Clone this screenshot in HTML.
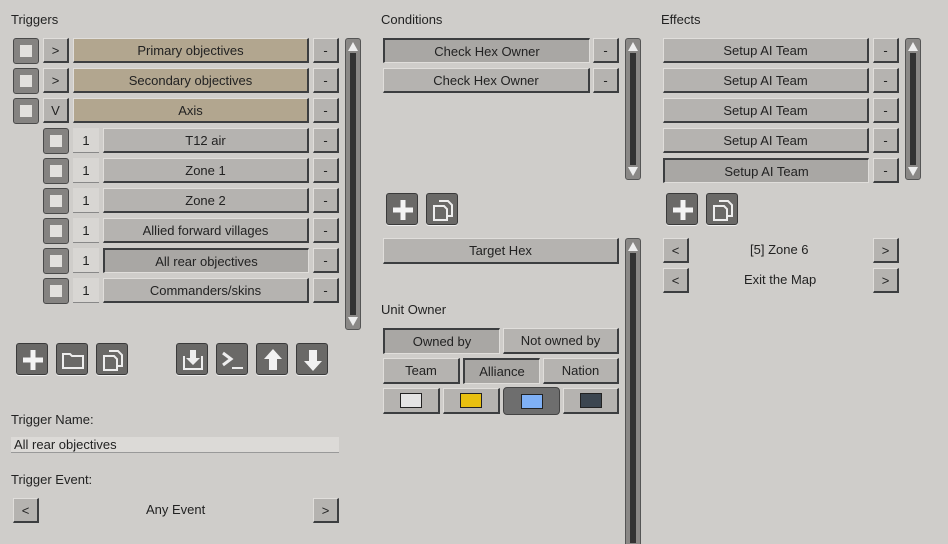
<!DOCTYPE html>
<html style="height:544px;overflow:hidden"><head><style>
body{margin:0;width:948px;height:544px;background:#cfcdca;font-family:"Liberation Sans","DejaVu Sans",sans-serif;font-size:13px;color:#222;position:relative;overflow:hidden}
.a{position:absolute}
.b{position:absolute;box-sizing:border-box;background:#b5b3b0;border:1px solid #e0dedb;border-right:2px solid #3c3e40;border-bottom:2px solid #3c3e40;display:flex;align-items:center;justify-content:center;font-size:13px;color:#222}
.t{background:#b2a68f}
.s{background:#a9a7a4;border:2px solid #3c3e40;border-right:1px solid #e0dedb;border-bottom:1px solid #e0dedb}
.n{background:#d8d6d3;border:none;border-bottom:1px solid #888}
.cb{position:absolute;width:26px;height:26px;box-sizing:border-box;background:#858381;border:1px solid #4a4a4a;border-radius:3px}
.cb:after{content:"";position:absolute;left:6px;top:6px;width:12px;height:12px;background:#e2e0dd}
.sb{position:absolute;width:16px;box-sizing:border-box;background:#8a8886;border:1px solid #555;border-radius:3px}
.sb:before{content:"";position:absolute;left:4px;right:4px;top:14px;bottom:14px;background:#333}
.sb .u,.sb .d{position:absolute;left:2px;width:0;height:0;border-left:5px solid transparent;border-right:5px solid transparent}
.sb .u{top:3px;border-bottom:9px solid #eee}
.sb .d{bottom:3px;border-top:9px solid #eee}
.ic{position:absolute;width:32px;height:32px;box-sizing:border-box;background:#6a6967;border:1px solid #3a3a3a;border-radius:3px;box-shadow:0 1px 0 #eee}
.ic svg{position:absolute;left:0;top:0}
.l{position:absolute;font-size:13px;color:#222}
</style></head><body>
<div class="l" style="left:11px;top:12px">Triggers</div>
<div class="l" style="left:381px;top:12px">Conditions</div>
<div class="l" style="left:661px;top:12px">Effects</div>

<div class="cb" style="left:13px;top:38px"></div><div class="b" style="left:43px;top:38px;width:26px;height:25px">&gt;</div><div class="b t" style="left:73px;top:38px;width:236px;height:25px">Primary objectives</div><div class="b" style="left:313px;top:38px;width:26px;height:25px">-</div>
<div class="cb" style="left:13px;top:68px"></div><div class="b" style="left:43px;top:68px;width:26px;height:25px">&gt;</div><div class="b t" style="left:73px;top:68px;width:236px;height:25px">Secondary objectives</div><div class="b" style="left:313px;top:68px;width:26px;height:25px">-</div>
<div class="cb" style="left:13px;top:98px"></div><div class="b" style="left:43px;top:98px;width:26px;height:25px">V</div><div class="b t" style="left:73px;top:98px;width:236px;height:25px">Axis</div><div class="b" style="left:313px;top:98px;width:26px;height:25px">-</div>
<div class="cb" style="left:43px;top:128px"></div><div class="b n" style="left:73px;top:128px;width:26px;height:25px">1</div><div class="b" style="left:103px;top:128px;width:206px;height:25px">T12 air</div><div class="b" style="left:313px;top:128px;width:26px;height:25px">-</div>
<div class="cb" style="left:43px;top:158px"></div><div class="b n" style="left:73px;top:158px;width:26px;height:25px">1</div><div class="b" style="left:103px;top:158px;width:206px;height:25px">Zone 1</div><div class="b" style="left:313px;top:158px;width:26px;height:25px">-</div>
<div class="cb" style="left:43px;top:188px"></div><div class="b n" style="left:73px;top:188px;width:26px;height:25px">1</div><div class="b" style="left:103px;top:188px;width:206px;height:25px">Zone 2</div><div class="b" style="left:313px;top:188px;width:26px;height:25px">-</div>
<div class="cb" style="left:43px;top:218px"></div><div class="b n" style="left:73px;top:218px;width:26px;height:25px">1</div><div class="b" style="left:103px;top:218px;width:206px;height:25px">Allied forward villages</div><div class="b" style="left:313px;top:218px;width:26px;height:25px">-</div>
<div class="cb" style="left:43px;top:248px"></div><div class="b n" style="left:73px;top:248px;width:26px;height:25px">1</div><div class="b s" style="left:103px;top:248px;width:206px;height:25px">All rear objectives</div><div class="b" style="left:313px;top:248px;width:26px;height:25px">-</div>
<div class="cb" style="left:43px;top:278px"></div><div class="b n" style="left:73px;top:278px;width:26px;height:25px">1</div><div class="b" style="left:103px;top:278px;width:206px;height:25px">Commanders/skins</div><div class="b" style="left:313px;top:278px;width:26px;height:25px">-</div>
<div class="sb" style="left:345px;top:38px;height:292px"><i class="u"></i><i class="d"></i></div>

<div class="ic" style="left:16px;top:343px"><svg width="32" height="32"><path d="M16 6v20M6 16h20" stroke="#f4f4f4" stroke-width="5"/></svg></div>
<div class="ic" style="left:56px;top:343px"><svg width="32" height="32"><path d="M6 10h7l2 2h11v12H6z" fill="none" stroke="#eee" stroke-width="2"/></svg></div>
<div class="ic" style="left:96px;top:343px"><svg width="32" height="32"><path d="M7 12h10l3 3v11H7z M12 7h9l4 4v11h-5" fill="none" stroke="#eee" stroke-width="2"/></svg></div>
<div class="ic" style="left:176px;top:343px"><svg width="32" height="32"><path d="M7 12v13h18V12" fill="none" stroke="#eee" stroke-width="2"/><path d="M13 6h6v8h4l-7 7-7-7h4z" fill="#eee"/></svg></div>
<div class="ic" style="left:216px;top:343px"><svg width="32" height="32"><path d="M6 9l8 6-8 6" fill="none" stroke="#eee" stroke-width="3"/><path d="M15 24h11" stroke="#eee" stroke-width="2"/></svg></div>
<div class="ic" style="left:256px;top:343px"><svg width="32" height="32"><path d="M16 5l9 10h-5v11h-8V15H7z" fill="#f2f2f2"/></svg></div>
<div class="ic" style="left:296px;top:343px"><svg width="32" height="32"><path d="M16 27l9-10h-5V6h-8v11H7z" fill="#f2f2f2"/></svg></div>

<div class="l" style="left:11px;top:412px">Trigger Name:</div>
<div class="a" style="left:11px;top:437px;width:328px;height:16px;background:#dcdad7;border-bottom:1px solid #999;font-size:13px;line-height:16px;padding-left:3px;box-sizing:border-box">All rear objectives</div>
<div class="l" style="left:11px;top:472px">Trigger Event:</div>
<div class="b" style="left:13px;top:498px;width:26px;height:25px">&lt;</div>
<div class="l" style="left:146px;top:502px">Any Event</div>
<div class="b" style="left:313px;top:498px;width:26px;height:25px">&gt;</div>

<div class="b s" style="left:383px;top:38px;width:207px;height:25px">Check Hex Owner</div><div class="b" style="left:593px;top:38px;width:26px;height:25px">-</div>
<div class="b" style="left:383px;top:68px;width:207px;height:25px">Check Hex Owner</div><div class="b" style="left:593px;top:68px;width:26px;height:25px">-</div>
<div class="sb" style="left:625px;top:38px;height:142px"><i class="u"></i><i class="d"></i></div>
<div class="ic" style="left:386px;top:193px"><svg width="32" height="32"><path d="M16 6v20M6 16h20" stroke="#f4f4f4" stroke-width="5"/></svg></div>
<div class="ic" style="left:426px;top:193px"><svg width="32" height="32"><path d="M7 12h10l3 3v11H7z M12 7h9l4 4v11h-5" fill="none" stroke="#eee" stroke-width="2"/></svg></div>
<div class="b" style="left:383px;top:238px;width:236px;height:26px">Target Hex</div>
<div class="sb" style="left:625px;top:238px;height:320px"><i class="u"></i></div>
<div class="l" style="left:381px;top:302px">Unit Owner</div>
<div class="b s" style="left:383px;top:328px;width:117px;height:26px">Owned by</div>
<div class="b" style="left:503px;top:328px;width:116px;height:26px">Not owned by</div>
<div class="b" style="left:383px;top:358px;width:77px;height:26px">Team</div>
<div class="b s" style="left:463px;top:358px;width:77px;height:26px">Alliance</div>
<div class="b" style="left:543px;top:358px;width:76px;height:26px">Nation</div>
<div class="b" style="left:383px;top:388px;width:57px;height:26px"><div style="width:20px;height:13px;background:#e4e4e4;border:1px solid #222"></div></div>
<div class="b" style="left:443px;top:388px;width:57px;height:26px"><div style="width:20px;height:13px;background:#e8c010;border:1px solid #222"></div></div>
<div class="b" style="left:503px;top:387px;width:57px;height:28px;background:#6e6e6e;border:1px solid #444;border-radius:4px"><div style="width:20px;height:13px;background:#7fb0f5;border:1px solid #222"></div></div>
<div class="b" style="left:563px;top:388px;width:56px;height:26px"><div style="width:20px;height:13px;background:#3c4650;border:1px solid #222"></div></div>

<div class="b" style="left:663px;top:38px;width:206px;height:25px">Setup AI Team</div><div class="b" style="left:873px;top:38px;width:26px;height:25px">-</div>
<div class="b" style="left:663px;top:68px;width:206px;height:25px">Setup AI Team</div><div class="b" style="left:873px;top:68px;width:26px;height:25px">-</div>
<div class="b" style="left:663px;top:98px;width:206px;height:25px">Setup AI Team</div><div class="b" style="left:873px;top:98px;width:26px;height:25px">-</div>
<div class="b" style="left:663px;top:128px;width:206px;height:25px">Setup AI Team</div><div class="b" style="left:873px;top:128px;width:26px;height:25px">-</div>
<div class="b s" style="left:663px;top:158px;width:206px;height:25px">Setup AI Team</div><div class="b" style="left:873px;top:158px;width:26px;height:25px">-</div>
<div class="sb" style="left:905px;top:38px;height:142px"><i class="u"></i><i class="d"></i></div>
<div class="ic" style="left:666px;top:193px"><svg width="32" height="32"><path d="M16 6v20M6 16h20" stroke="#f4f4f4" stroke-width="5"/></svg></div>
<div class="ic" style="left:706px;top:193px"><svg width="32" height="32"><path d="M7 12h10l3 3v11H7z M12 7h9l4 4v11h-5" fill="none" stroke="#eee" stroke-width="2"/></svg></div>
<div class="b" style="left:663px;top:238px;width:26px;height:25px">&lt;</div>
<div class="l" style="left:750px;top:242px">[5] Zone 6</div>
<div class="b" style="left:873px;top:238px;width:26px;height:25px">&gt;</div>
<div class="b" style="left:663px;top:268px;width:26px;height:25px">&lt;</div>
<div class="l" style="left:744px;top:272px">Exit the Map</div>
<div class="b" style="left:873px;top:268px;width:26px;height:25px">&gt;</div>
</body></html>
